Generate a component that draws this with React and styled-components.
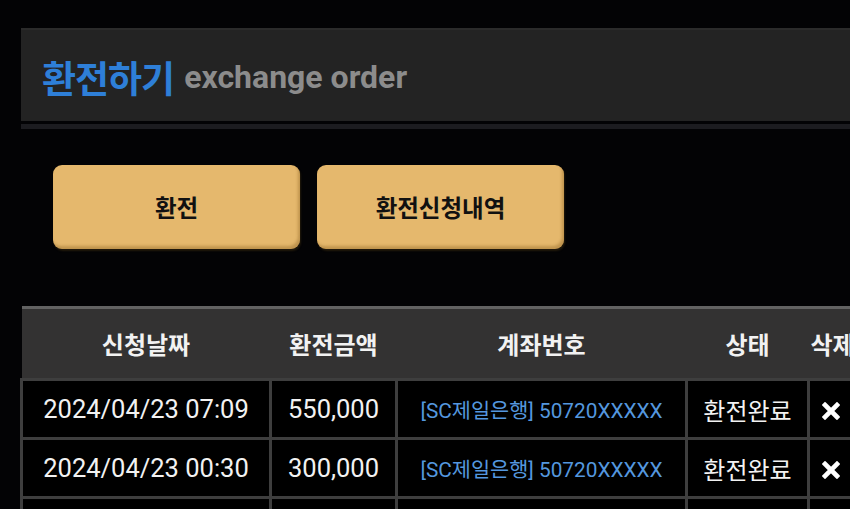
import React from 'react'
import styled, { createGlobalStyle } from 'styled-components'

const GlobalStyle = createGlobalStyle`
    html, body {
        margin: 0;
        padding: 0;
        background: #000;
    }
    body {
        font-family: Roboto, "Noto Sans CJK KR", sans-serif;
        color: #fff;
    }
`

const Page = styled.div`
    width: 850px;
    height: 509px;
    overflow: hidden;
    background: #030305;
    padding: 28px 0 0 21px;
    box-sizing: border-box;
`

const TitleBar = styled.div`
    height: 96px;
    background: #232323;
    border-top: 2px solid #2b2b2b;
    box-sizing: border-box;
    display: flex;
    align-items: center;
    padding: 3px 0 0 21px;
    gap: 10px;
    border-bottom: 3px solid #030305;
    box-shadow: 0 5px 0 0 #1c1c20;
`

const Title = styled.h1`
    margin: 0;
    font-family: "Noto Sans CJK KR", sans-serif;
    font-size: 37px;
    font-weight: 700;
    color: #2e7fd8;
    letter-spacing: -1px;
`

const Sub = styled.span`
    font-family: Roboto, sans-serif;
    font-size: 32px;
    font-weight: 700;
    color: #8c8c8c;
`

const ButtonRow = styled.div`
    display: flex;
    gap: 17px;
    padding: 41px 0 0 32px;
`

const Button = styled.button`
    width: 247px;
    height: 84px;
    border: none;
    border-radius: 9px;
    background: #e5b86d;
    box-shadow: inset -2px -3px 3px rgba(120, 80, 20, 0.35), 1px 2px 2px rgba(80, 60, 20, 0.4);
    font-family: "Noto Sans CJK KR", sans-serif;
    font-size: 23.5px;
    font-weight: 700;
    color: #111;
    padding: 0;
`

const Table = styled.table`
    margin-top: 57px;
    margin-left: -1px;
    border-collapse: collapse;
    table-layout: fixed;
    width: 880px;
    border-top: 3px solid #626262;
`

const HeadCell = styled.th`
    height: 69px;
    background: #333232;
    font-family: "Noto Sans CJK KR", sans-serif;
    font-size: 24px;
    font-weight: 700;
    color: #f2f2f2;
    text-align: ${p => (p.left ? 'left' : 'center')};
    padding: 0 0 0 ${p => (p.left ? 2 : 0)}px;
    width: ${p => p.w}px;
    border-bottom: 3px solid #3e3e3e;
    white-space: nowrap;
    overflow: hidden;
`

const Cell = styled.td`
    height: 56px;
    border: 3px solid #3e3e3e;
    background: #000;
    font-size: ${p => (p.bank ? 20.8 : 25.5)}px;
    color: ${p => (p.bank ? '#5497de' : '#f2f2f2')};
    white-space: nowrap;
    overflow: hidden;
    text-align: ${p => (p.left ? 'left' : 'center')};
    padding: 0 0 0 ${p => (p.left ? 12 : 0)}px;
`

const StatusText = styled.span`
    font-size: 24px;
`

const DeleteIcon = () => (
    <svg width="18" height="18" viewBox="0 0 18 18" style={{ verticalAlign: 'middle' }}>
        <path d="M3 3 L15 15 M15 3 L3 15" stroke="#fff" strokeWidth="4.6" strokeLinecap="square" />
    </svg>
)

const rows = [
    { date: '2024/04/23 07:09', amount: '550,000', account: '[SC제일은행] 50720XXXXX', status: '환전완료' },
    { date: '2024/04/23 00:30', amount: '300,000', account: '[SC제일은행] 50720XXXXX', status: '환전완료' },
    { date: '', amount: '', account: '', status: '' }
]

export default function App() {
    return (
        <Page>
            <GlobalStyle />
            <TitleBar>
                <Title>환전하기</Title>
                <Sub>exchange order</Sub>
            </TitleBar>
            <ButtonRow>
                <Button>환전</Button>
                <Button>환전신청내역</Button>
            </ButtonRow>
            <Table>
                <thead>
                    <tr>
                        <HeadCell w={249}>신청날짜</HeadCell>
                        <HeadCell w={126}>환전금액</HeadCell>
                        <HeadCell w={290}>계좌번호</HeadCell>
                        <HeadCell w={122}>상태</HeadCell>
                        <HeadCell w={93} left>삭제</HeadCell>
                    </tr>
                </thead>
                <tbody>
                    {rows.map((r, i) => (
                        <tr key={i}>
                            <Cell>{r.date}</Cell>
                            <Cell>{r.amount}</Cell>
                            <Cell bank>{r.account}</Cell>
                            <Cell><StatusText>{r.status}</StatusText></Cell>
                            <Cell left>{r.status && <DeleteIcon />}</Cell>
                        </tr>
                    ))}
                </tbody>
            </Table>
        </Page>
    )
}
